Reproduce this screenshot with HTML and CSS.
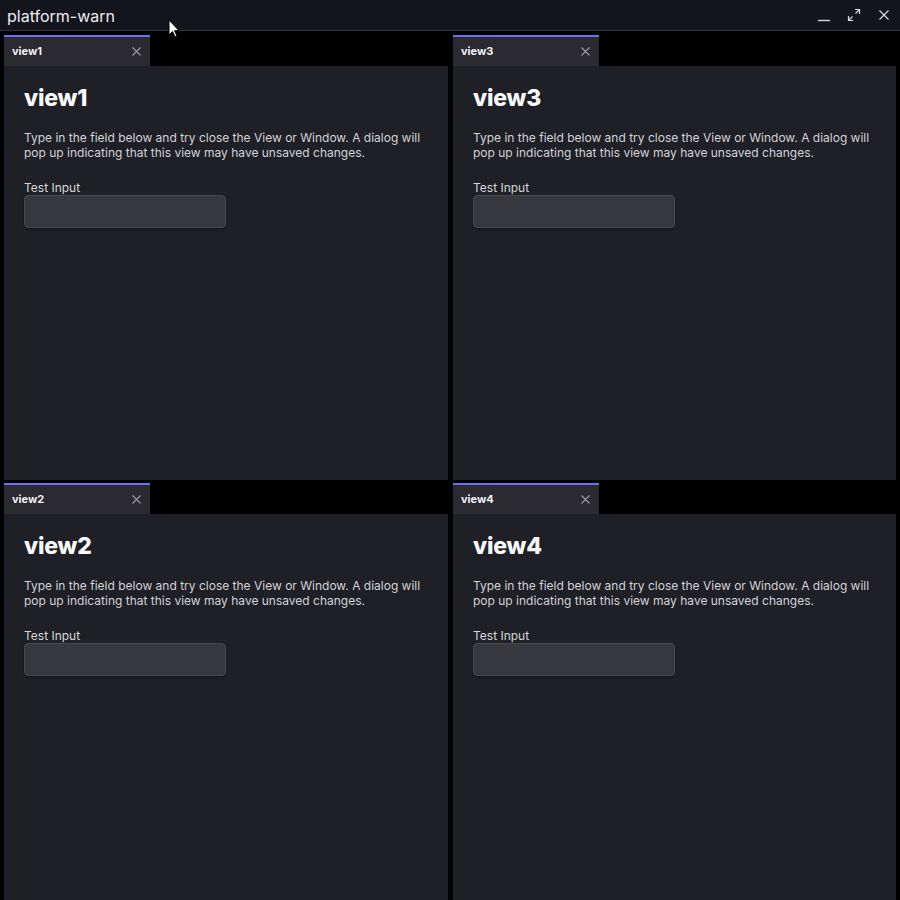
FILE: index.html
```html
<!DOCTYPE html>
<html>
<head>
<meta charset="utf-8">
<link rel="stylesheet" href="styles.css">
</head>
<body>
<div class="titlebar">
  <span class="title">platform-warn</span>
  <div class="controls">
    <svg class="ctl" width="14" height="14" viewBox="0 0 14 14"><path d="M1 12.5h12" stroke="#d8d8de" stroke-width="1.4"/></svg>
    <svg class="ctl" width="14" height="14" viewBox="0 0 14 14" fill="none" stroke="#d8d8de" stroke-width="1.2"><path d="M8 1.5h4.5V6M12.5 1.5L8.5 5.5M1.5 8v4.5H6M1.5 12.5l4-4"/></svg>
    <svg class="ctl" width="14" height="14" viewBox="0 0 14 14" fill="none" stroke="#d8d8de" stroke-width="1.2"><path d="M2.5 2.5l9 9M11.5 2.5l-9 9"/></svg>
  </div>
</div>
<div class="grid">
  <section class="panel">
    <div class="tabs"><div class="tab"><span>view1</span><svg width="9" height="9" viewBox="0 0 9 9" stroke="#9a9aa2" stroke-width="1.1"><path d="M0.5 0.5l8 8M8.5 0.5l-8 8"/></svg></div></div>
    <div class="content">
      <h1>view1</h1>
      <p>Type in the field below and try close the View or Window. A dialog will pop up indicating that this view may have unsaved changes.</p>
      <label>Test Input</label>
      <input type="text">
    </div>
  </section>
  <section class="panel">
    <div class="tabs"><div class="tab"><span>view3</span><svg width="9" height="9" viewBox="0 0 9 9" stroke="#9a9aa2" stroke-width="1.1"><path d="M0.5 0.5l8 8M8.5 0.5l-8 8"/></svg></div></div>
    <div class="content">
      <h1>view3</h1>
      <p>Type in the field below and try close the View or Window. A dialog will pop up indicating that this view may have unsaved changes.</p>
      <label>Test Input</label>
      <input type="text">
    </div>
  </section>
  <section class="panel">
    <div class="tabs"><div class="tab"><span>view2</span><svg width="9" height="9" viewBox="0 0 9 9" stroke="#9a9aa2" stroke-width="1.1"><path d="M0.5 0.5l8 8M8.5 0.5l-8 8"/></svg></div></div>
    <div class="content">
      <h1>view2</h1>
      <p>Type in the field below and try close the View or Window. A dialog will pop up indicating that this view may have unsaved changes.</p>
      <label>Test Input</label>
      <input type="text">
    </div>
  </section>
  <section class="panel">
    <div class="tabs"><div class="tab"><span>view4</span><svg width="9" height="9" viewBox="0 0 9 9" stroke="#9a9aa2" stroke-width="1.1"><path d="M0.5 0.5l8 8M8.5 0.5l-8 8"/></svg></div></div>
    <div class="content">
      <h1>view4</h1>
      <p>Type in the field below and try close the View or Window. A dialog will pop up indicating that this view may have unsaved changes.</p>
      <label>Test Input</label>
      <input type="text">
    </div>
  </section>
</div>
<svg class="cursor" width="14" height="20" viewBox="0 0 14 20"><path d="M1 1v15l3.5-3.5 2.5 5.5 2-1-2.5-5.3H11z" fill="#fff" stroke="#000" stroke-width="1"/></svg>
</body>
</html>
```

FILE: styles.css
```css
html, body {
  margin: 0;
  padding: 0;
  height: 900px;
  overflow: hidden;
  background: #000;
  font-family: Inter, "Noto Sans", sans-serif;
}
.titlebar {
  height: 30px;
  background: #14141c;
  border-bottom: 1px solid #34343e;
  display: flex;
  align-items: center;
  justify-content: space-between;
  box-sizing: content-box;
}
.title {
  color: #ececf2;
  font-size: 16px;
  padding-left: 7px;
  margin-top: 2px;
}
.controls {
  display: flex;
  gap: 16px;
  padding-right: 9px;
  align-items: center;
  margin-top: -1px;
}
.ctl { display: block; }
.grid {
  display: grid;
  grid-template-columns: 444px 443px;
  grid-template-rows: 445px 445px;
  column-gap: 5px;
  row-gap: 3px;
  padding: 4px 4px 0 4px;
}
.panel {
  display: flex;
  flex-direction: column;
  min-height: 0;
}
.tabs {
  display: flex;
  height: 31px;
  flex: none;
}
.tab {
  width: 146px;
  box-sizing: border-box;
  border-top: 2px solid #6e6ef0;
  background: #2a2a30;
  display: flex;
  align-items: center;
  justify-content: space-between;
  padding: 0 9px 1px 8px;
  color: #f2f2f6;
  font-size: 11px;
  font-weight: 700;
}
.content {
  flex: 1;
  background: #1f2025;
  padding: 19px 20px 0 20px;
}
h1 {
  margin: 0;
  font-size: 23px;
  line-height: 27px;
  font-weight: 800;
  letter-spacing: -0.2px;
  color: #f8f8fb;
}
p {
  margin: 18px 0 20px 0;
  font-size: 12px;
  line-height: 15px;
  color: #d2d2d9;
}
label {
  display: block;
  font-size: 12px;
  line-height: 15px;
  color: #d6d6dc;
}
input {
  display: block;
  width: 202px;
  height: 33px;
  box-sizing: border-box;
  background: #37383e;
  border: 1px solid #48494f;
  border-radius: 4px;
  box-shadow: 0 1px 2px rgba(0,0,0,0.4);
  margin: 0;
  outline: none;
}
.cursor {
  position: absolute;
  left: 168px;
  top: 19px;
}
```
